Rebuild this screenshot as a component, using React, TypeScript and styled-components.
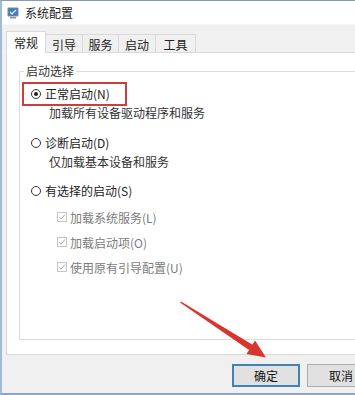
import React from 'react';
import styled, { createGlobalStyle } from 'styled-components';

const GlobalStyle = createGlobalStyle`
	html, body {
		margin: 0;
		padding: 0;
		background: #ffffff;
	}
	body {
		font-family: 'Noto Sans CJK SC', 'Microsoft YaHei', sans-serif;
		font-size: 12px;
		color: #1a1a1a;
	}
`;

const tabs = ['常规', '引导', '服务', '启动', '工具'];
const tabWidths = [40, 38, 37, 38, 41];

const options = [
	{ label: '加载系统服务(L)' },
	{ label: '加载启动项(O)' },
	{ label: '使用原有引导配置(U)' },
];

const AppIcon = () => (
	<svg width="12" height="12" viewBox="0 0 12 12">
		<rect x="0.5" y="0.5" width="11" height="9" rx="1" fill="#7d8a99" />
		<rect x="1.5" y="1.5" width="9" height="7" fill="#3b7fc4" />
		<path d="M3 5l2 2 4-4" stroke="#ffffff" strokeWidth="1.2" fill="none" />
		<rect x="3" y="10" width="6" height="1.5" fill="#8a96a3" />
	</svg>
);

const App = () => {
	return (
		<>
			<GlobalStyle />
			<Window>
				<TitleBar>
					<AppIcon />
					<Title>系统配置</Title>
				</TitleBar>
				<Body>
					<TabRow>
						{tabs.map((t, i) => (
							<Tab key={t} $active={i === 0} $width={tabWidths[i]}>
								{t}
							</Tab>
						))}
					</TabRow>
					<Panel>
						<Group>
							<Legend>启动选择</Legend>
							<Highlight>
								<RadioRow>
									<Radio $checked />
									<span>正常启动(N)</span>
								</RadioRow>
							</Highlight>
							<SubText $top={-1}>加载所有设备驱动程序和服务</SubText>
							<RadioRow $top={14}>
								<Radio />
								<span>诊断启动(D)</span>
							</RadioRow>
							<SubText $top={3}>仅加载基本设备和服务</SubText>
							<RadioRow $top={13}>
								<Radio />
								<span>有选择的启动(S)</span>
							</RadioRow>
							<CheckList>
								{options.map((o) => (
									<CheckRow key={o.label}>
										<CheckBox>
											<svg width="8" height="8" viewBox="0 0 8 8">
												<path d="M1 4.2l2 2L7 1.5" stroke="#a8a8a8" strokeWidth="1" fill="none" />
											</svg>
										</CheckBox>
										<span>{o.label}</span>
									</CheckRow>
								))}
							</CheckList>
						</Group>
					</Panel>
					<Footer>
						<Button $primary>确定</Button>
						<Button>取消</Button>
					</Footer>
				</Body>
				<Arrow width="355" height="395" viewBox="0 0 355 395">
					<polygon points="180,302.5 181,301.5 253,345 249,350" fill="#d9352f" />
					<polygon points="266,357.5 246.5,354 255,340.5" fill="#d9352f" />
				</Arrow>
			</Window>
		</>
	);
};

export default App;

// styles
const Window = styled.div`
	position: relative;
	width: 355px;
	height: 395px;
	box-sizing: border-box;
	border-top: 1px solid #8d9aa8;
	border-left: 2px solid #9fbbd6;
	border-bottom: 2px solid #8fa4c0;
	display: flex;
	flex-direction: column;
	overflow: hidden;
	background: #f0f0f0;
`;

const TitleBar = styled.div`
	height: 23px;
	background: #ffffff;
	display: flex;
	align-items: center;
	gap: 6px;
	padding-left: 5px;
	box-sizing: border-box;
`;

const Title = styled.span`
	font-size: 12px;
	color: #222;
`;

const Body = styled.div`
	flex: 1;
	display: flex;
	flex-direction: column;
	padding: 6px 0 0 4px;
	background: #f0f0f0;
	border-top: 1px solid #f6f6f6;
`;

const TabRow = styled.div`
	display: flex;
	align-items: flex-end;
	height: 22px;
	position: relative;
	z-index: 1;
	margin-bottom: -1px;
`;

const Tab = styled.div<{ $active?: boolean; $width: number }>`
	width: ${(p) => p.$width}px;
	height: ${(p) => (p.$active ? 22 : 19)}px;
	box-sizing: border-box;
	display: flex;
	align-items: center;
	justify-content: center;
	background: ${(p) => (p.$active ? '#ffffff' : '#f0f0f0')};
	border: 1px solid #d9d9d9;
	border-bottom: ${(p) => (p.$active ? '1px solid #ffffff' : '1px solid #d9d9d9')};
	margin-left: -1px;
	padding-top: ${(p) => (p.$active ? 0 : 1)}px;
	font-size: 12px;
	color: #222;
	&:first-child {
		margin-left: 0;
	}
`;

const Panel = styled.div`
	height: 303px;
	box-sizing: border-box;
	background: #ffffff;
	border: 1px solid #d9d9d9;
	border-right: none;
	padding: 18px 0 0 12px;
`;

const Group = styled.div`
	position: relative;
	height: 269px;
	box-sizing: border-box;
	border: 1px solid #dcdcdc;
	border-right: none;
	padding: 10px 0 0 2px;
`;

const Legend = styled.span`
	position: absolute;
	top: -9px;
	left: 4px;
	padding: 0 2px;
	background: #ffffff;
	font-size: 12px;
	color: #333;
	line-height: 16px;
`;

const Highlight = styled.div`
	width: 105px;
	height: 24px;
	box-sizing: border-box;
	border: 2px solid #cc3d3b;
	display: flex;
	align-items: center;
	padding-left: 7px;
`;

const RadioRow = styled.div<{ $top?: number }>`
	display: flex;
	align-items: center;
	gap: 4px;
	height: 16px;
	margin-top: ${(p) => p.$top || 0}px;
	padding-left: ${(p) => (p.$top ? 9 : 0)}px;
	font-size: 12px;
	line-height: 16px;
	color: #222;
`;

const Radio = styled.span<{ $checked?: boolean }>`
	width: 10px;
	height: 10px;
	box-sizing: border-box;
	border-radius: 50%;
	border: 1px solid #333;
	display: inline-flex;
	align-items: center;
	justify-content: center;
	&::after {
		content: '';
		width: 4px;
		height: 4px;
		border-radius: 50%;
		background: ${(p) => (p.$checked ? '#222' : 'transparent')};
	}
`;

const SubText = styled.div<{ $top: number }>`
	margin-top: ${(p) => p.$top}px;
	padding-left: 27px;
	font-size: 12px;
	line-height: 16px;
	color: #333;
`;

const CheckList = styled.div`
	display: flex;
	flex-direction: column;
	gap: 9px;
	margin-top: 10px;
	padding-left: 35px;
`;

const CheckRow = styled.div`
	display: flex;
	align-items: center;
	gap: 3px;
	height: 16px;
	font-size: 12px;
	color: #7c7c7c;
`;

const CheckBox = styled.span`
	width: 10px;
	height: 10px;
	box-sizing: border-box;
	border: 1px solid #c6c6c6;
	display: inline-flex;
	align-items: center;
	justify-content: center;
`;

const Footer = styled.div`
	flex: 1;
	display: flex;
	justify-content: flex-start;
	align-items: flex-start;
	gap: 7px;
	padding: 9px 0 0 226px;
`;

const Button = styled.div<{ $primary?: boolean }>`
	flex-shrink: 0;
	width: 68px;
	height: 23px;
	box-sizing: border-box;
	display: flex;
	align-items: center;
	justify-content: center;
	background: #e1e1e1;
	border: ${(p) => (p.$primary ? '2px solid #3e82b8' : '1px solid #adadad')};
	font-size: 12px;
	color: #111;
`;

const Arrow = styled.svg`
	position: absolute;
	left: -2px;
	top: -1px;
	pointer-events: none;
`;
